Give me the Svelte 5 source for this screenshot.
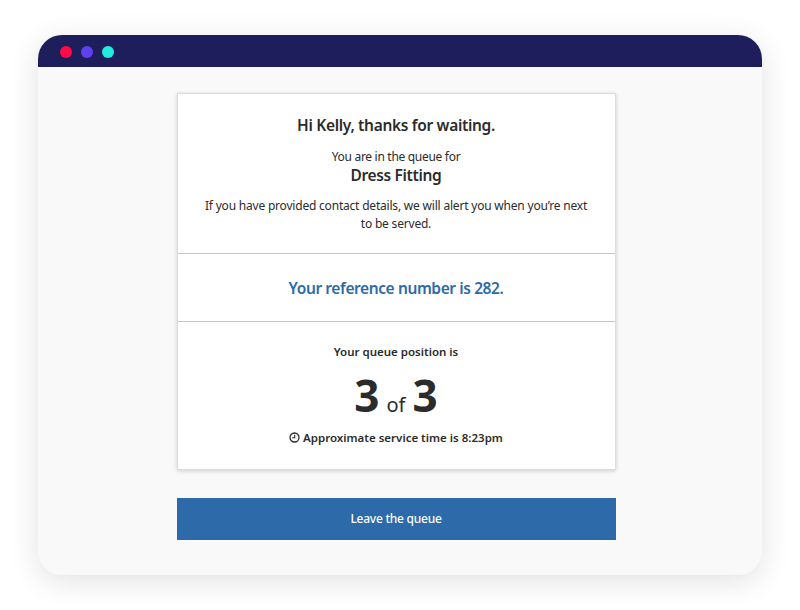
<script>
	let name = 'Kelly';
	let queueName = 'Dress Fitting';
	let reference = 282;
	let position = 3;
	let total = 3;
	let serviceTime = '8:23pm';
</script>

<div class="page">
	<div class="window">
		<div class="titlebar">
			<span class="dot red"></span>
			<span class="dot purple"></span>
			<span class="dot teal"></span>
		</div>
		<div class="content">
			<div class="card">
				<section class="intro">
					<h1>Hi {name}, thanks for waiting.</h1>
					<p class="queue-label">You are in the queue for</p>
					<h2>{queueName}</h2>
					<p class="note">If you have provided contact details, we will alert you when you’re next to be served.</p>
				</section>
				<section class="reference">
					<h3>Your reference number is {reference}.</h3>
				</section>
				<section class="position">
					<p class="position-label">Your queue position is</p>
					<div class="count"><b>{position}</b><span>of</span><b>{total}</b></div>
					<p class="time">
						<svg width="11" height="11" viewBox="0 0 12 12" fill="none" stroke="currentColor">
							<circle cx="6" cy="6" r="4.9" stroke-width="1.4" />
							<path d="M6.2 3v3.3H3.4" stroke-width="1.2" />
						</svg>
						Approximate service time is {serviceTime}
					</p>
				</section>
			</div>
			<button type="button" class="leave">Leave the queue</button>
		</div>
	</div>
</div>

<style>
	:global(body) {
		margin: 0;
		background: #fff;
	}

	.page {
		width: 800px;
		height: 610px;
		box-sizing: border-box;
		padding: 35px 38px;
		font-family: "Noto Sans", "Open Sans", sans-serif;
		color: #2b2b2b;
		overflow: hidden;
	}

	.window {
		height: 540px;
		border-radius: 24px;
		background: #f9f9f9;
		box-shadow: 0 6px 30px rgba(0, 0, 0, 0.12);
		overflow: hidden;
		display: flex;
		flex-direction: column;
	}

	.titlebar {
		height: 32px;
		flex: none;
		background: #1f1e5c;
		display: flex;
		align-items: center;
		padding: 2px 0 0 21.5px;
		gap: 8.5px;
		box-sizing: border-box;
	}

	.dot {
		width: 12.5px;
		height: 12.5px;
		border-radius: 50%;
	}

	.red { background: #ff0b47; }
	.purple { background: #5f3ff0; }
	.teal { background: #22ebe0; }

	.content {
		display: flex;
		flex-direction: column;
		align-items: center;
		padding: 26px 8px 0 0;
	}

	.card {
		width: 439px;
		box-sizing: border-box;
		background: #fff;
		border: 1px solid #dcdcdc;
		box-shadow: 0 1px 4px rgba(0, 0, 0, 0.18);
	}

	section {
		text-align: center;
		box-sizing: border-box;
	}

	.intro {
		height: 160px;
		padding: 20px 24px 0;
		border-bottom: 1px solid #c4c4c4;
	}

	h1 {
		margin: 0;
		font-size: 15.5px;
		line-height: 22px;
		font-weight: 600;
		letter-spacing: -0.32px;
	}

	.queue-label {
		margin: 12px 0 0;
		font-size: 12px;
		line-height: 18px;
		letter-spacing: -0.3px;
	}

	h2 {
		margin: -1px 0 0;
		font-size: 15.5px;
		line-height: 21px;
		font-weight: 600;
		letter-spacing: -0.35px;
	}

	.note {
		margin: 11px 0 0;
		font-size: 12px;
		line-height: 18px;
		letter-spacing: -0.2px;
	}

	.reference {
		height: 68px;
		display: flex;
		align-items: center;
		justify-content: center;
		border-bottom: 1px solid #c4c4c4;
	}

	h3 {
		margin: 0;
		font-size: 15.5px;
		font-weight: 600;
		letter-spacing: -0.4px;
		color: #2c6aa9;
	}

	.position {
		padding-top: 21px;
		height: 147px;
	}

	.position-label {
		margin: 0;
		font-size: 11.5px;
		line-height: 18px;
		font-weight: 600;
	}

	.count {
		margin-top: 8px;
		height: 52px;
		line-height: 52px;
		font-size: 20px;
		display: flex;
		justify-content: center;
		align-items: baseline;
		gap: 7px;
	}

	.count b {
		font-size: 44px;
		font-weight: 700;
	}

	.time {
		margin: 8px 0 0;
		font-size: 11.5px;
		line-height: 18px;
		font-weight: 600;
	}

	.time svg {
		vertical-align: -1px;
	}

	.leave {
		margin-top: 28px;
		width: 439px;
		height: 42px;
		padding: 0 0 2px;
		border: none;
		background: #2c6aa9;
		color: #fff;
		font-family: inherit;
		font-size: 12px;
		font-weight: 500;
		letter-spacing: -0.25px;
		cursor: pointer;
	}
</style>
